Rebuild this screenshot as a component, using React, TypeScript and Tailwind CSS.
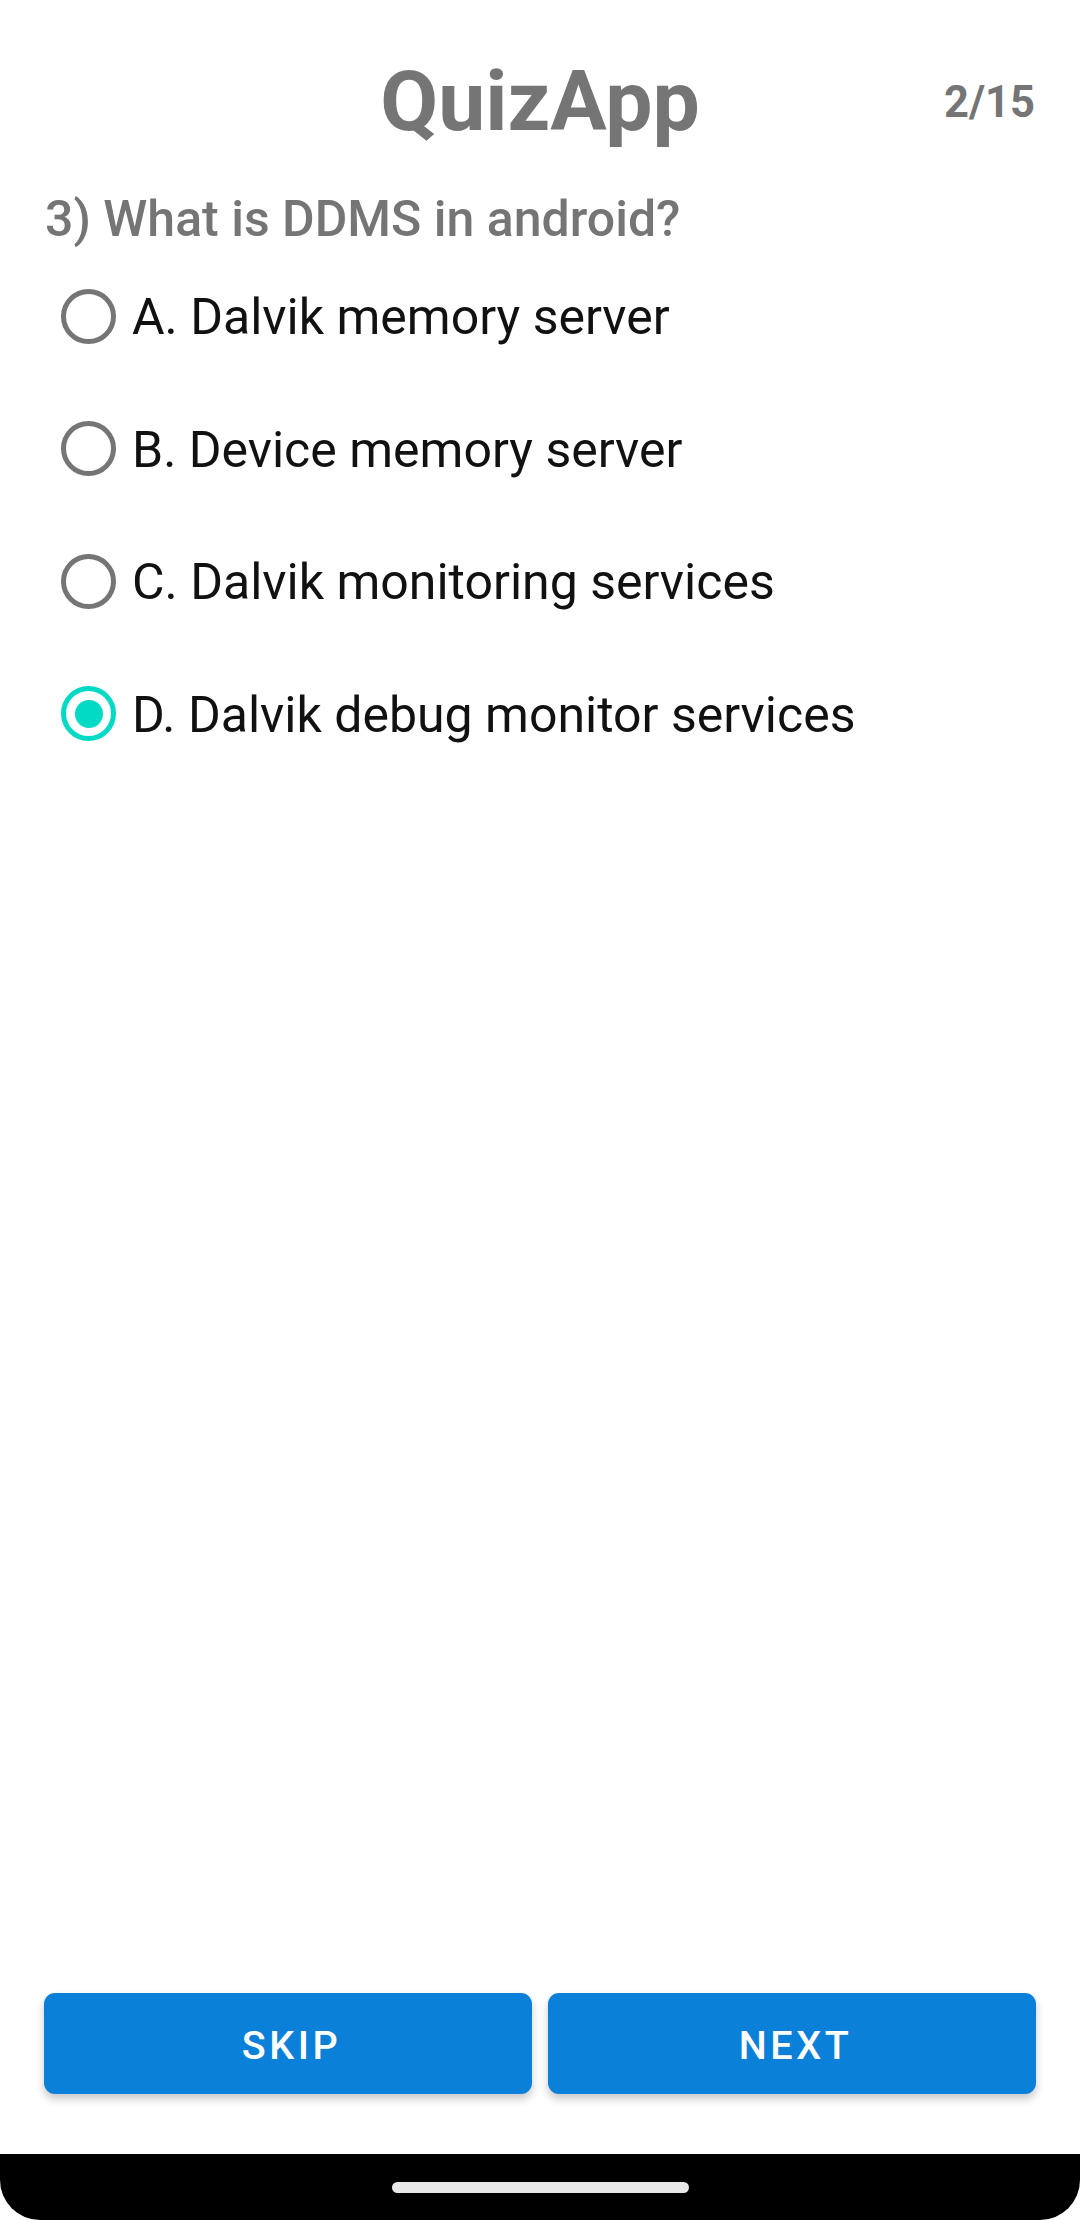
import React, { useState } from "react";

const options = [
  "A. Dalvik memory server",
  "B. Device memory server",
  "C. Dalvik monitoring services",
  "D. Dalvik debug monitor services",
];

function Radio({ checked }: { checked: boolean }) {
  return (
    <span
      className={
        checked
          ? "flex h-[55px] w-[55px] shrink-0 items-center justify-center rounded-full border-[5.5px] border-[#03dac5]"
          : "flex h-[55px] w-[55px] shrink-0 items-center justify-center rounded-full border-[5.5px] border-[#757575]"
      }
    >
      {checked && <span className="h-[28px] w-[28px] rounded-full bg-[#03dac5]" />}
    </span>
  );
}

export default function App() {
  const [selected, setSelected] = useState(3);

  return (
    <div className="flex h-[2220px] w-[1080px] flex-col bg-white font-[Roboto,sans-serif]">
      {/* header */}
      <header className="grid grid-cols-[1fr_auto_1fr] items-start px-[45px] pt-[60px]">
        <div />
        <h1 className="text-[84px] font-bold leading-[1] text-[#757575]">QuizApp</h1>
        <span className="mt-[21px] justify-self-end text-[43.5px] font-bold leading-[1] text-[#757575]">
          2/15
        </span>
      </header>

      <p className="mt-[50px] px-[45px] text-[50px] font-medium leading-[1] text-[#757575]">
        3) What is DDMS in android?
      </p>

      <ul className="mt-[6px] flex flex-col">
        {options.map((opt, i) => (
          <li key={opt}>
            <button
              className="flex h-[132.5px] w-full items-center pl-[61px] text-left"
              onClick={() => setSelected(i)}
            >
              <Radio checked={selected === i} />
              <span className="ml-[16px] pt-[2px] text-[50px] leading-[1] text-[#111111]">{opt}</span>
            </button>
          </li>
        ))}
      </ul>

      <div className="flex-1" />

      {/* actions */}
      <div className="flex gap-[16px] px-[44px]">
        <button className="flex h-[101px] flex-1 items-center justify-center rounded-[11px] bg-[#0b80d8] pl-[7px] pt-[4px] text-[39.5px] font-medium uppercase leading-[1] tracking-[0.09em] text-white shadow-[0_5px_8px_rgba(0,0,0,0.22)]">
          Skip
        </button>
        <button className="flex h-[101px] flex-1 items-center justify-center rounded-[11px] bg-[#0b80d8] pl-[7px] pt-[4px] text-[39.5px] font-medium uppercase leading-[1] tracking-[0.09em] text-white shadow-[0_5px_8px_rgba(0,0,0,0.22)]">
          Next
        </button>
      </div>

      {/* system nav bar */}
      <div className="mt-[60px] flex h-[66px] items-center justify-center rounded-b-[40px] bg-black">
        <span className="h-[11px] w-[297px] rounded-full bg-[#e8e8e8]" />
      </div>
    </div>
  );
}
